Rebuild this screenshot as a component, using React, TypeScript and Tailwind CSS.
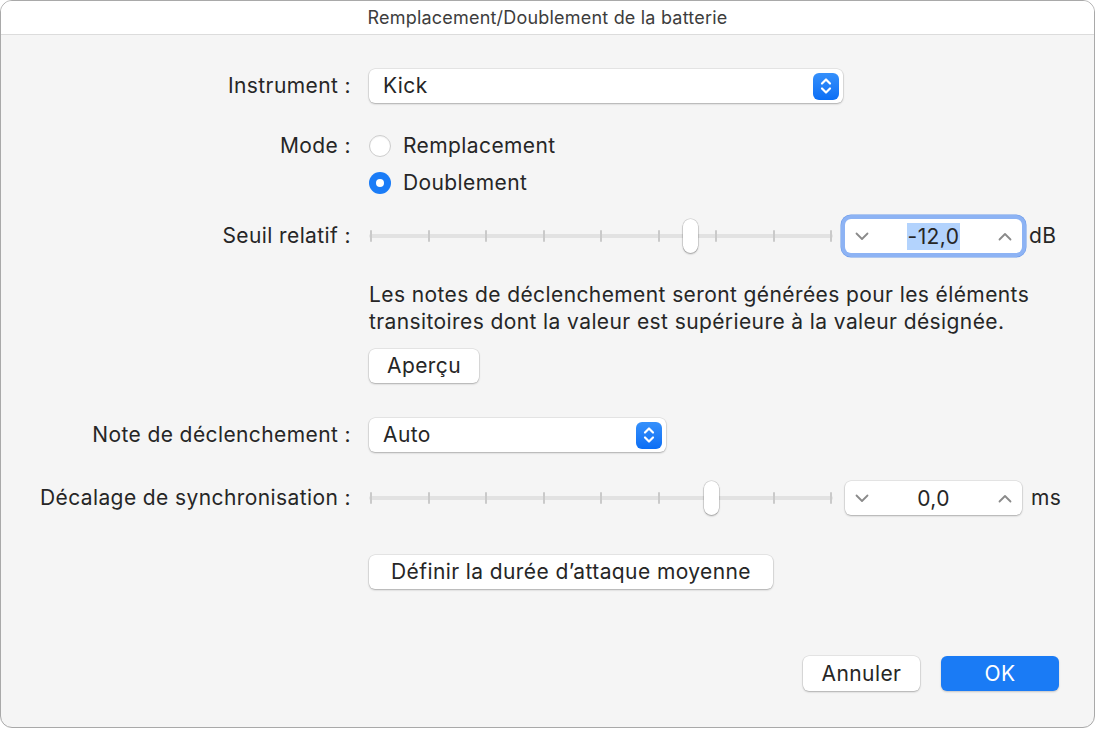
import type { ReactNode } from "react";

const font = { fontFamily: "Inter, 'Noto Sans', sans-serif" };

const txt = "text-[21px] tracking-[0.4px] text-[#262626]";

function Label({ children }: { children?: ReactNode }) {
  return <div className={`w-[350px] shrink-0 text-right ${txt}`}>{children}</div>;
}

function PopupArrows() {
  return (
    <div className="flex h-[27px] w-[26px] items-center justify-center rounded-[6px] bg-gradient-to-b from-[#3590fb] to-[#0a6ef5]">
      <svg width="12" height="18" viewBox="0 0 12 18" fill="none" stroke="white" strokeWidth="2.2" strokeLinecap="round" strokeLinejoin="round">
        <path d="M2 6.5 L6 2.5 L10 6.5" />
        <path d="M2 11.5 L6 15.5 L10 11.5" />
      </svg>
    </div>
  );
}

function Popup({ value, width }: { value: string; width: string }) {
  return (
    <div className={`flex h-[34px] items-center justify-between rounded-[6px] bg-white pl-[14px] pr-[4px] shadow-[0_0_0_0.5px_rgba(0,0,0,0.12),0_1px_2px_rgba(0,0,0,0.25)] ${width}`}>
      <span className={txt}>{value}</span>
      <PopupArrows />
    </div>
  );
}

function Radio({ checked, label }: { checked?: boolean; label: string }) {
  return (
    <div className="flex h-[37px] items-center">
      {checked ? (
        <div className="flex h-[22px] w-[22px] items-center justify-center rounded-full bg-[#1a7cf7]">
          <div className="h-[8px] w-[8px] rounded-full bg-white" />
        </div>
      ) : (
        <div className="h-[22px] w-[22px] rounded-full border border-[#cdcdcd] bg-white shadow-[inset_0_1px_1px_rgba(0,0,0,0.05)]" />
      )}
      <span className={`ml-[12px] ${txt}`}>{label}</span>
    </div>
  );
}

function Slider({ knob }: { knob: number }) {
  const ticks = [0, 1, 2, 3, 4, 5, 6, 7, 8];
  return (
    <div className="relative h-[34px] w-[464px]">
      <div className="absolute left-0 right-0 top-[15px] h-[4px] rounded-full bg-[#e2e2e2]" />
      <div className="absolute inset-x-0 top-[11px] flex justify-between px-[1px]">
        {ticks.map((t) => (
          <div key={t} className="h-[12px] w-[2px] rounded-full bg-[#cacaca]" />
        ))}
      </div>
      <div
        className="absolute top-0 h-[34px] w-[15px] rounded-full bg-white shadow-[0_0_0_0.5px_rgba(0,0,0,0.18),0_1px_2px_rgba(0,0,0,0.3)]"
        style={{ left: knob }}
      />
    </div>
  );
}

function Chevron({ up }: { up?: boolean }) {
  return (
    <svg width="14" height="9" viewBox="0 0 14 9" fill="none" stroke="#8a8a8a" strokeWidth="1.8" strokeLinecap="round" strokeLinejoin="round">
      {up ? <path d="M1.5 7.5 L7 2 L12.5 7.5" /> : <path d="M1.5 1.5 L7 7 L12.5 1.5" />}
    </svg>
  );
}

function Stepper({ value, focused }: { value: string; focused?: boolean }) {
  return (
    <div
      className={`flex h-[34px] w-[177px] items-center justify-between rounded-[6px] bg-white px-[10px] ${
        focused
          ? "shadow-[0_0_0_4px_#8db3f4,0_0_0_4.5px_#6d9bea]"
          : "shadow-[0_0_0_0.5px_rgba(0,0,0,0.12),0_1px_2px_rgba(0,0,0,0.25)]"
      }`}
    >
      <Chevron />
      <span className={`px-[1px] leading-[27px] ${txt} ${focused ? "bg-[#b3d3fd]" : ""}`}>{value}</span>
      <Chevron up />
    </div>
  );
}

function Button({ children, className = "" }: { children?: ReactNode; className?: string }) {
  return (
    <div
      className={`flex h-[34px] items-center justify-center rounded-[6px] bg-white ${txt} shadow-[0_0_0_0.5px_rgba(0,0,0,0.12),0_1px_2px_rgba(0,0,0,0.25)] ${className}`}
    >
      {children}
    </div>
  );
}

export default function App() {
  return (
    <div className="h-[729px] w-[1096px] bg-white" style={font}>
      <div className="flex h-[728px] w-[1095px] flex-col overflow-hidden rounded-[12px] border border-[#a9a9a9] bg-[#f5f5f5]">
        <div className="flex h-[34px] shrink-0 items-center justify-center border-b border-[#dcdcdc] bg-white text-[18px] tracking-[0.2px] text-[#3d3d3d]">
          Remplacement/Doublement de la batterie
        </div>

        <div className="flex flex-col">
          <div className="mt-[34px] flex items-center">
            <Label>Instrument :</Label>
            <div className="ml-[18px]">
              <Popup value="Kick" width="w-[474px]" />
            </div>
          </div>

          <div className="mt-[24px] flex">
            <div className="flex h-[37px] items-center">
              <Label>Mode :</Label>
            </div>
            <div className="ml-[18px] flex flex-col">
              <Radio label="Remplacement" />
              <Radio checked label="Doublement" />
            </div>
          </div>

          <div className="mt-[18px] flex items-center">
            <Label>Seuil relatif :</Label>
            <div className="ml-[18px] flex items-center">
              <Slider knob={314} />
              <div className="ml-[12px]">
                <Stepper value="-12,0" focused />
              </div>
              <span className={`ml-[7px] ${txt}`}>dB</span>
            </div>
          </div>

          <div className="mt-[28px] flex">
            <div className="w-[350px] shrink-0" />
            <div className="ml-[18px] flex flex-col items-start">
              <p className={`leading-[27px] ${txt}`}>
                Les notes de déclenchement seront générées pour les éléments
                <br />
                transitoires dont la valeur est supérieure à la valeur désignée.
              </p>
              <Button className="mt-[14px] w-[110px]">Aperçu</Button>
            </div>
          </div>

          <div className="mt-[35px] flex items-center">
            <Label>Note de déclenchement :</Label>
            <div className="ml-[18px]">
              <Popup value="Auto" width="w-[297px]" />
            </div>
          </div>

          <div className="mt-[29px] flex items-center">
            <Label>Décalage de synchronisation :</Label>
            <div className="ml-[18px] flex items-center">
              <Slider knob={335} />
              <div className="ml-[12px]">
                <Stepper value="0,0" />
              </div>
              <span className={`ml-[9px] ${txt}`}>ms</span>
            </div>
          </div>

          <div className="mt-[40px] flex">
            <div className="w-[350px] shrink-0" />
            <div className="ml-[18px]">
              <Button className="w-[404px]">Définir la durée d’attaque moyenne</Button>
            </div>
          </div>

          <div className="mt-[67px] flex justify-end gap-[21px] pr-[35px]">
            <Button className="h-[35px] w-[117px]">Annuler</Button>
            <div className="flex h-[35px] w-[118px] items-center justify-center rounded-[6px] bg-[#1a7bf5] text-[21px] tracking-[0.4px] text-white shadow-[0_1px_2px_rgba(0,0,0,0.2)]">
              OK
            </div>
          </div>
        </div>
      </div>
    </div>
  );
}
